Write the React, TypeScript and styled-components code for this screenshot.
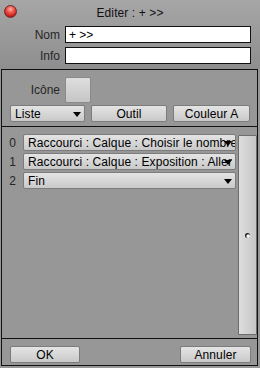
import * as React from 'react'
import styled, {createGlobalStyle} from 'styled-components'

const GlobalStyle = createGlobalStyle`
  html, body {
    margin: 0;
    padding: 0;
    background: #979797;
  }
  body {
    font-family: "Liberation Sans", Arial, sans-serif;
    font-size: 12px;
    color: #000;
  }
`

const Window = styled.div`
  width: 260px;
  height: 368px;
  display: flex;
  flex-direction: column;
  background: #979797;
  overflow: hidden;
`

const Header = styled.div`
  height: 69px;
  box-sizing: border-box;
  padding-bottom: 5px;
  display: flex;
  flex-direction: column;
  gap: 4px;
  background: linear-gradient(#a6a6a6, #8e8e8e);
`

const TitleBar = styled.div`
  position: relative;
  height: 22px;
  display: flex;
  align-items: center;
  justify-content: center;
  padding-top: 2px;
  margin-bottom: -2px;
  font-size: 12px;
  letter-spacing: 0.1px;
  color: #111;
`

const CloseBall = styled.span`
  position: absolute;
  left: 4px;
  top: 5px;
  width: 13px;
  height: 13px;
  box-sizing: border-box;
  border-radius: 50%;
  border: 1px solid #6a2a2a;
  background: radial-gradient(circle at 50% 30%, #ffb0a8 0, #f05a50 35%, #c41a14 75%, #8a0c0a 100%);
`

const FieldRow = styled.div`
  display: grid;
  grid-template-columns: 60px 186px;
  column-gap: 5px;
  align-items: center;
  height: 17px;
`

const Label = styled.span`
  text-align: right;
  color: #262626;
  font-size: 12px;
  white-space: nowrap;
`

const TextField = styled.div`
  height: 17px;
  box-sizing: border-box;
  border: 1px solid #111;
  background: #fff;
  padding: 0 3px;
  display: flex;
  align-items: center;
  font-size: 12px;
  white-space: nowrap;
`

const Panels = styled.div`
  flex: 1;
  display: flex;
  flex-direction: column;
  margin: 0 2px 2px 1px;
  border: 1px solid #111;
`

const Panel = styled.div<{$grow?: boolean}>`
  ${p => p.$grow ? 'flex: 1;' : ''}
  & + & {
    border-top: 1px solid #111;
  }
`

const ToolPanel = styled(Panel)`
  height: 56px;
  box-sizing: border-box;
  padding: 7px 0 4px;
  display: flex;
  flex-direction: column;
  gap: 2px;
`

const IconRow = styled.div`
  display: grid;
  grid-template-columns: 58px 26px;
  column-gap: 5px;
  align-items: center;
`

const IconSlot = styled.div`
  width: 26px;
  height: 26px;
  box-sizing: border-box;
  border-radius: 2px;
  border: 1px solid #8a8a8a;
  background: linear-gradient(#dedede, #c6c6c6);
`

const ButtonRow = styled.div`
  display: grid;
  grid-template-columns: 75px 76px 77px;
  column-gap: 6px;
  padding-left: 8px;
`

const Button = styled.div<{$width?: number}>`
  position: relative;
  height: 17px;
  ${p => p.$width ? `width: ${p.$width}px;` : ''}
  box-sizing: border-box;
  border-radius: 2px;
  border: 1px solid #7c7c7c;
  background: linear-gradient(#e4e4e4, #c9c9c9);
  display: flex;
  align-items: center;
  justify-content: center;
  font-size: 12px;
  letter-spacing: 0.1px;
  color: #000;
  white-space: nowrap;
`

const Menu = styled(Button)`
  justify-content: flex-start;
  padding-left: 4px;
  overflow: hidden;
`

const MenuText = styled.span`
  overflow: hidden;
  white-space: nowrap;
`

const Arrow = styled.span`
  position: absolute;
  right: 3px;
  top: 6px;
  width: 0;
  height: 0;
  border-left: 4px solid transparent;
  border-right: 4px solid transparent;
  border-top: 5px solid #000;
`

const ListPanel = styled(Panel)`
  box-sizing: border-box;
  padding: 7px 0 3px;
  display: grid;
  grid-template-columns: 1fr 19px;
  column-gap: 1px;
`

const Rows = styled.div`
  display: flex;
  flex-direction: column;
  gap: 2px;
`

const ItemRow = styled.div`
  display: grid;
  grid-template-columns: 21px 213px;
  align-items: center;
`

const Index = styled.span`
  text-align: center;
  color: #262626;
  font-size: 12px;
`

const ScrollBar = styled.div`
  margin-top: 1px;
  box-sizing: border-box;
  border: 1px solid #6c6c6c;
  border-radius: 1px;
  background: linear-gradient(90deg, #dedede, #c6c6c6);
  display: flex;
  align-items: center;
  justify-content: center;
`

const Knob = styled.span`
  width: 5px;
  height: 5px;
  border-radius: 50%;
  background: radial-gradient(circle at 65% 65%, #fff 0, #fff 25%, #1a1a1a 55%);
`

const FooterPanel = styled(Panel)`
  height: 27px;
  box-sizing: border-box;
  padding: 7px 6px 3px 8px;
  display: flex;
  justify-content: space-between;
`

const items = [
  'Raccourci : Calque : Choisir le nombre',
  'Raccourci : Calque : Exposition : Aller',
  'Fin'
]

export default function App() {
  return (
    <React.Fragment>
      <GlobalStyle/>
      <Window>
        <Header>
          <TitleBar>
            <CloseBall/>
            Editer : + &gt;&gt;
          </TitleBar>
          <FieldRow>
            <Label>Nom</Label>
            <TextField>+ &gt;&gt;</TextField>
          </FieldRow>
          <FieldRow>
            <Label>Info</Label>
            <TextField/>
          </FieldRow>
        </Header>
        <Panels>
          <ToolPanel>
            <IconRow>
              <Label>Icône</Label>
              <IconSlot/>
            </IconRow>
            <ButtonRow>
              <Menu>
                <MenuText>Liste</MenuText>
                <Arrow/>
              </Menu>
              <Button>Outil</Button>
              <Button>Couleur A</Button>
            </ButtonRow>
          </ToolPanel>
          <ListPanel $grow>
            <Rows>
              {items.map((text, i) => (
                <ItemRow key={i}>
                  <Index>{i}</Index>
                  <Menu>
                    <MenuText>{text}</MenuText>
                    <Arrow/>
                  </Menu>
                </ItemRow>
              ))}
            </Rows>
            <ScrollBar>
              <Knob/>
            </ScrollBar>
          </ListPanel>
          <FooterPanel>
            <Button $width={70}>OK</Button>
            <Button $width={71}>Annuler</Button>
          </FooterPanel>
        </Panels>
      </Window>
    </React.Fragment>
  )
}
